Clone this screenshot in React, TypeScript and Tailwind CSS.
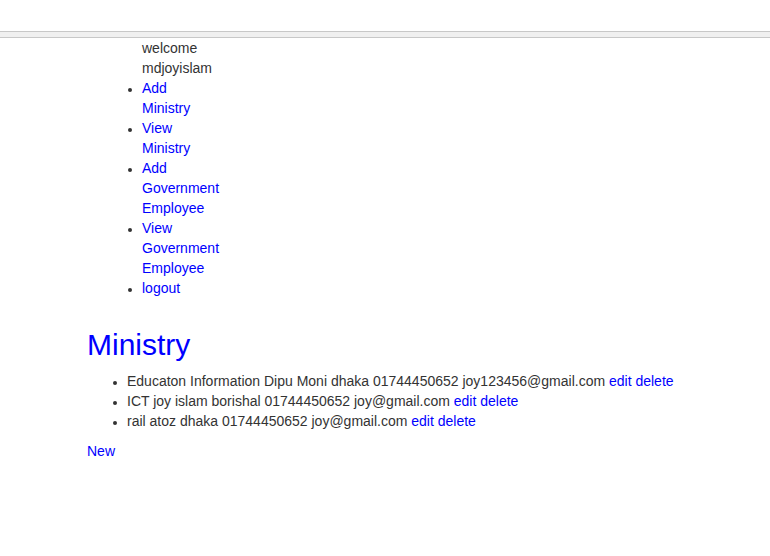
const navLinks = ["Add Ministry", "View Ministry", "Add Government Employee", "View Government Employee", "logout"];

const ministries = [
  "Educaton Information Dipu Moni dhaka 01744450652 joy123456@gmail.com",
  "ICT joy islam borishal 01744450652 joy@gmail.com",
  "rail atoz dhaka 01744450652 joy@gmail.com",
];

export default function App() {
  return (
    <div className="min-h-[556px] bg-white text-[14px] leading-5 text-[#333] font-['Liberation_Sans',Arial,sans-serif]">
      <div className="h-[31px]"></div>
      <div className="h-[7px] border-y border-[#c8c8c8] bg-[#f0f0f0]"></div>

      {/* side menu */}
      <ul className="ml-[102px] pl-10 w-min list-disc marker:text-[12px]">
        <li className="list-none">welcome mdjoyislam</li>
        {navLinks.map(link => (
          <li key={link}>
            <a href="#" className="inline-block w-min align-top text-[14px] text-[#0000ff]">{link}</a>
          </li>
        ))}
      </ul>

      <div className="ml-[87px] mt-7">
        <h1 className="text-[30px] leading-[37px] text-[#0000ff]">Ministry</h1>
        <ul className="mt-2 pl-10 list-disc marker:text-[12px]">
          {ministries.map(m => (
            <li key={m}>
              {m} <a href="#" className="text-[#0000ff]">edit</a> <a href="#" className="text-[#0000ff]">delete</a>
            </li>
          ))}
        </ul>
        <a href="#" className="block mt-[10px] w-fit text-[#0000ff]">New</a>
      </div>
    </div>
  );
}
